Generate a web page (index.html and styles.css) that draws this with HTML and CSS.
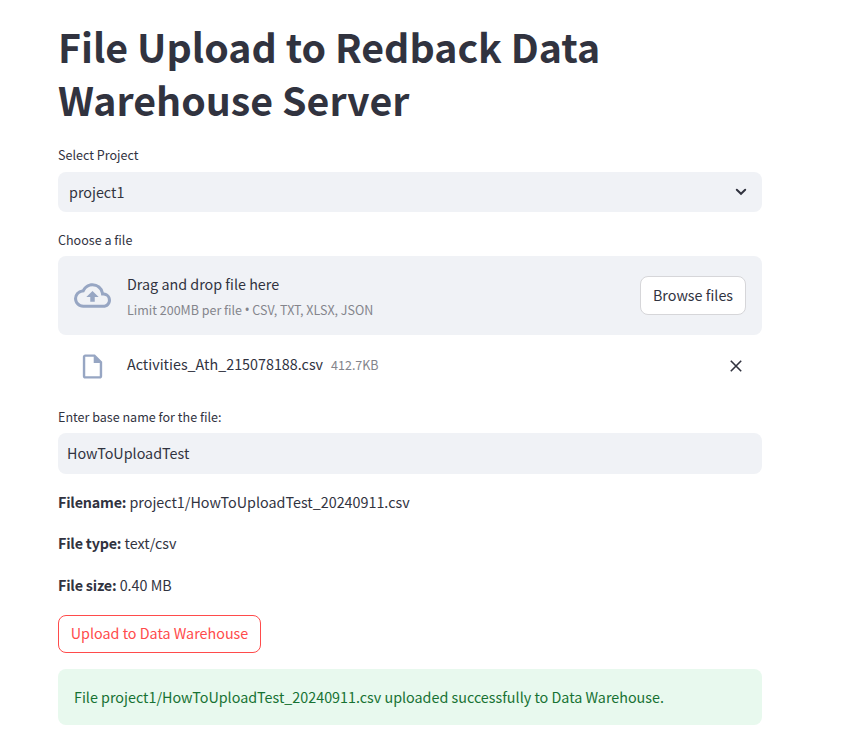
FILE: index.html
```html
<!DOCTYPE html>
<html lang="en">
<head>
<meta charset="utf-8">
<title>File Upload</title>
<link rel="stylesheet" href="styles.css">
</head>
<body>
<main class="page">
  <h1 class="title">File Upload to Redback Data<br>Warehouse Server</h1>

  <div class="label"><span>Select Project</span></div>
  <div class="select"><span>project1</span>
    <svg class="chevron" width="12" height="8" viewBox="0 0 12 8"><path d="M1.800 1.800 6 5.800l4.200-4" fill="none" stroke="#31333f" stroke-width="2" stroke-linecap="round"/></svg>
  </div>

  <div class="label"><span>Choose a file</span></div>
  <section class="dropzone">
    <svg class="cloud" width="37" height="37" viewBox="0 0 24 24" fill="#97a6c3"><path d="M19.350 10.040A7.490 7.490 0 0 0 12 4C9.110 4 6.600 5.640 5.350 8.040A5.994 5.994 0 0 0 0 14c0 3.310 2.690 6 6 6h13c2.760 0 5-2.240 5-5 0-2.640-2.050-4.780-4.650-4.960zM19 18H6c-2.210 0-4-1.790-4-4 0-2.050 1.530-3.760 3.560-3.970l1.070-.11.500-.95A5.469 5.469 0 0 1 12 6c2.620 0 4.880 1.860 5.390 4.430l.3 1.500 1.530.11A2.980 2.980 0 0 1 22 15c0 1.650-1.350 3-3 3zM8 13h2.550v3h2.900v-3H16l-4-4z"/></svg>
    <div class="hint">
      <div class="hint-main">Drag and drop file here</div>
      <div class="hint-sub">Limit 200MB per file <span class="bullet">•</span> CSV, TXT, XLSX, JSON</div>
    </div>
    <button class="button">Browse files</button>
  </section>
  <div class="file">
    <svg class="doc" width="29" height="29" viewBox="0 0 24 24" fill="#97a6c3"><path d="M14 2H6c-1.100 0-1.990.9-1.990 2L4 20c0 1.100.89 2 1.990 2H18c1.100 0 2-.9 2-2V8l-6-6zM6 20V4h7v5h5v11H6z"/></svg>
    <span class="file-name">Activities_Ath_215078188.csv</span>
    <span class="file-size">412.7KB</span>
    <svg class="close" width="12" height="12" viewBox="0 0 12 12"><path d="M.8.8l10.400 10.400M11.200.8.8 11.200" stroke="#31333f" stroke-width="1.600"/></svg>
  </div>

  <div class="label label-name"><span>Enter base name for the file:</span></div>
  <div class="input"><span>HowToUploadTest</span></div>

  <div class="details">
    <p class="info"><b>Filename:</b> <span>project1/HowToUploadTest_20240911.csv</span></p>
    <p class="info"><b>File type:</b> <span>text/csv</span></p>
    <p class="info"><b>File size:</b> <span>0.40 MB</span></p>
  </div>

  <button class="button primary">Upload to Data Warehouse</button>
  <div class="alert"><span>File project1/HowToUploadTest_20240911.csv uploaded successfully to Data Warehouse.</span></div>
</main>
</body>
</html>
```
FILE: styles.css
```css
* { box-sizing: border-box; }
body { margin: 0; background: #fff; color: #31333f; font-family: "Source Sans Pro", "Noto Sans CJK SC", sans-serif; font-size: 14.330px; line-height: 24px; }
.page { width: 704px; margin-left: 58px; padding-top: 19px; display: flex; flex-direction: column; align-items: stretch; }
.title { margin: 0 0 3px; font-size: 39.300px; line-height: 53px; font-weight: 700; white-space: nowrap; }
.label { font-size: 12.550px; line-height: 20px; margin-top: 17px; white-space: nowrap; }
.select { height: 40px; margin-top: 7px; padding: 0 15px 0 11px; background: #f0f2f6; border-radius: 8px; display: flex; align-items: center; justify-content: space-between; }
.select + .label { margin-top: 18px; }
.dropzone { height: 79px; margin-top: 6px; padding: 0 16px; background: #f0f2f6; border-radius: 8px; display: flex; align-items: center; }
.hint { margin-left: 16px; flex: 1; white-space: nowrap; }
.hint-sub { font-size: 12.500px; color: #84858c; line-height: 20px; margin-top: 4px; }
.bullet { font-family: "Open Sans", sans-serif; font-size: 14px; line-height: 1; margin: 0 -0.3px; }
.button { font: inherit; color: inherit; background: #fff; height: 39px; padding: 0 0 2px; width: 106px; border: 1px solid #d6d6d9; border-radius: 8px; white-space: nowrap; }
.file { height: 32px; margin-top: 15px; padding: 0 20px; display: flex; align-items: center; white-space: nowrap; }
.file-name { margin-left: 20px; padding-bottom: 4px; }
.file-size { margin-left: 8px; padding-bottom: 2px; font-size: 12.500px; color: #84858c; }
.close { margin-left: auto; }
.label-name { margin-top: 25px; }
.input { height: 41px; margin-top: 6px; padding: 0 9px 1px; background: #f0f2f6; border-radius: 8px; display: flex; align-items: center; }
.details { margin-top: 16px; display: flex; flex-direction: column; gap: 17.400px; }
.info { margin: 0; white-space: nowrap; line-height: 24px; }
.info b { letter-spacing: -0.2px; }
.primary { width: 203px; height: 38px; margin-top: 18.200px; border-color: #ff4b4b; color: #ff4b4b; }
.alert { height: 56px; margin-top: 16px; padding: 0 16px; background: #e8f9ee; color: #177233; border-radius: 8px; display: flex; align-items: center; white-space: nowrap; }
```
